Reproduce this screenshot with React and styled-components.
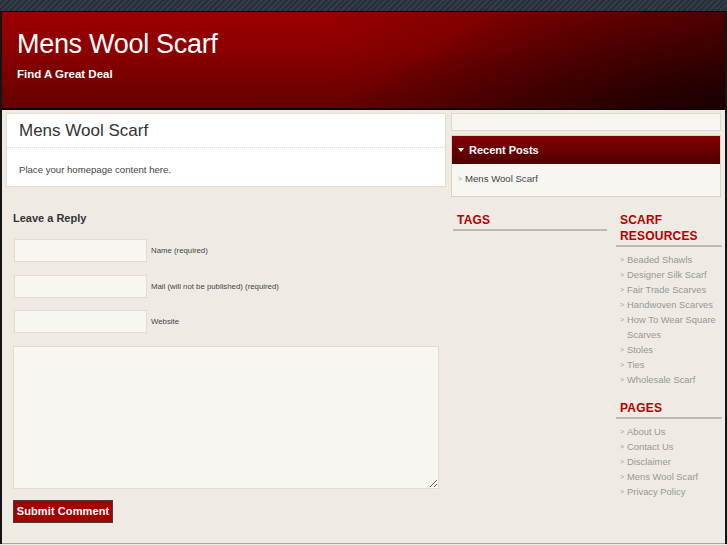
import React from 'react'
import styled, { createGlobalStyle } from 'styled-components'

const GlobalStyle = createGlobalStyle`
  body {
    margin: 0;
    background: #efebe4;
    font-family: "Liberation Sans", Arial, sans-serif;
  }
  * { box-sizing: border-box; }
`

const resources = [
  'Beaded Shawls',
  'Designer Silk Scarf',
  'Fair Trade Scarves',
  'Handwoven Scarves',
  'How To Wear Square Scarves',
  'Stoles',
  'Ties',
  'Wholesale Scarf',
]

const pages = ['About Us', 'Contact Us', 'Disclaimer', 'Mens Wool Scarf', 'Privacy Policy']

const fields = [
  { label: 'Name (required)' },
  { label: 'Mail (will not be published) (required)' },
  { label: 'Website' },
]

const App = () => {
  return (
    <>
      <GlobalStyle />
      <TopStrip />
      <Frame>
        <Header>
          <SiteTitle>Mens Wool Scarf</SiteTitle>
          <Tagline>Find A Great Deal</Tagline>
        </Header>
        <Body>
          <Main>
            <PostBox>
              <PostTitle>Mens Wool Scarf</PostTitle>
              <PostText>Place your homepage content here.</PostText>
            </PostBox>
            <ReplyTitle>Leave a Reply</ReplyTitle>
            <Form>
              {fields.map((f) => (
                <FieldRow key={f.label}>
                  <Input type="text" />
                  <FieldLabel>{f.label}</FieldLabel>
                </FieldRow>
              ))}
              <TextArea />
              <SubmitButton type="button">Submit Comment</SubmitButton>
            </Form>
          </Main>
          <Sidebar>
            <EmptyBox />
            <Widget>
              <WidgetHead>
                <Arrow />
                Recent Posts
              </WidgetHead>
              <WidgetBody>
                <PostLink>
                  <Marker>&gt;</Marker>Mens Wool Scarf
                </PostLink>
              </WidgetBody>
            </Widget>
            <SubColumns>
              <SubCol>
                <ColTitle>Tags</ColTitle>
              </SubCol>
              <SubCol>
                <ColTitle>Scarf Resources</ColTitle>
                <LinkList>
                  {resources.map((r) => (
                    <LinkItem key={r}>
                      <Marker>&gt;</Marker>
                      <span>{r}</span>
                    </LinkItem>
                  ))}
                </LinkList>
                <ColTitle $top={13}>Pages</ColTitle>
                <LinkList>
                  {pages.map((p) => (
                    <LinkItem key={p}>
                      <Marker>&gt;</Marker>
                      <span>{p}</span>
                    </LinkItem>
                  ))}
                </LinkList>
              </SubCol>
            </SubColumns>
          </Sidebar>
        </Body>
      </Frame>
    </>
  )
}

export default App

const TopStrip = styled.div`
  height: 11px;
  background: repeating-linear-gradient(135deg, #333c47 0 2px, #272f39 2px 4px);
`

const Frame = styled.div`
  width: 727px;
  border-top: 1px solid #0b0b0b;
  border-left: 2px solid #141414;
  border-right: 2px solid #141414;
`

const Header = styled.div`
  height: 98px;
  padding: 16px 15px 0;
  border-bottom: 2px solid #120505;
  background:
    radial-gradient(circle 540px at 700px 500px, rgba(0, 0, 0, 0.07) 97%, transparent 100%),
    radial-gradient(ellipse 320px 110px at 100% 100%, rgba(0, 0, 0, 0.55) 0%, transparent 100%),
    linear-gradient(to right, rgba(0, 0, 0, 0) 45%, rgba(0, 0, 0, 0.4) 100%),
    linear-gradient(to bottom, #9a0000 0%, #8c0000 40%, #650000 100%);
`

const SiteTitle = styled.h1`
  margin: 0;
  font-weight: normal;
  font-size: 27px;
  line-height: 32px;
  color: #ffffff;
  letter-spacing: -0.3px;
`

const Tagline = styled.div`
  margin-top: 7px;
  font-weight: bold;
  font-size: 11.5px;
  line-height: 14px;
  color: #ffffff;
`

const Body = styled.div`
  display: grid;
  grid-template-columns: 440px 271px;
  column-gap: 5px;
  padding: 3px 3px 0 4px;
  height: 434px;
  border-bottom: 1px solid #a8a49e;
  background: #efebe4;
`

const Main = styled.div`
  display: flex;
  flex-direction: column;
`

const PostBox = styled.div`
  background: #ffffff;
  border: 1px solid #e2dccf;
  height: 74px;
`

const PostTitle = styled.h2`
  margin: 0;
  padding-left: 12px;
  height: 34px;
  line-height: 33px;
  font-size: 17px;
  font-weight: normal;
  color: #333333;
  border-bottom: 1px dotted #dedad3;
`

const PostText = styled.p`
  margin: 0;
  padding: 16px 0 0 12px;
  font-size: 9.6px;
  line-height: 12px;
  color: #444444;
`

const ReplyTitle = styled.h3`
  margin: 24px 0 0 7px;
  font-size: 11px;
  line-height: 14px;
  font-weight: bold;
  color: #333333;
`

const Form = styled.div`
  display: flex;
  flex-direction: column;
  align-items: flex-start;
  margin-top: 14px;
  padding-left: 7px;
`

const FieldRow = styled.div`
  display: flex;
  align-items: center;
  gap: 4px;
  margin-bottom: 12.5px;
  padding-left: 1px;
`

const Input = styled.input`
  width: 133px;
  height: 23px;
  margin: 0;
  padding: 0 4px;
  background: #f8f6f1;
  border: 1px solid #e6dccb;
  outline: none;
`

const FieldLabel = styled.label`
  font-size: 7.8px;
  color: #444444;
`

const TextArea = styled.textarea`
  width: 426px;
  height: 143px;
  margin: 0;
  background: #f8f6f1;
  border: 1px solid #e6dccb;
  outline: none;
  resize: both;
`

const SubmitButton = styled.button`
  margin-top: 11px;
  width: 100px;
  height: 23px;
  padding: 0;
  background: #a30000;
  border: 1px solid #4a3a3a;
  color: #ffffff;
  font-family: "Liberation Sans", Arial, sans-serif;
  font-weight: bold;
  font-size: 11px;
  letter-spacing: 0.1px;
`

const Sidebar = styled.div`
  display: flex;
  flex-direction: column;
`

const EmptyBox = styled.div`
  width: 270px;
  height: 18px;
  background: #f8f6f1;
  border: 1px solid #e0d7c7;
`

const Widget = styled.div`
  width: 270px;
  margin-top: 4px;
  border: 1px solid #dcd2c1;
  background: #f8f6f1;
`

const WidgetHead = styled.div`
  display: flex;
  align-items: center;
  height: 28px;
  padding-left: 6px;
  gap: 5px;
  background: linear-gradient(to bottom, #800000 0%, #6a0000 50%, #4e0000 100%);
  color: #ffffff;
  font-weight: bold;
  font-size: 11px;
`

const Arrow = styled.span`
  width: 0;
  height: 0;
  border-left: 3px solid transparent;
  border-right: 3px solid transparent;
  border-top: 4px solid #ffffff;
`

const WidgetBody = styled.div`
  height: 32px;
  padding: 9px 0 0 6px;
`

const PostLink = styled.div`
  display: flex;
  align-items: center;
  font-size: 9.6px;
  line-height: 12px;
  color: #444444;
`

const Marker = styled.span`
  flex: none;
  width: 7px;
  font-size: 7px;
  color: #a0a0a0;
`

const SubColumns = styled.div`
  display: grid;
  grid-template-columns: 154px 106px;
  column-gap: 9px;
  margin-top: 15px;
  padding-left: 2px;
`

const SubCol = styled.div`
  display: flex;
  flex-direction: column;
`

const ColTitle = styled.h4`
  margin: ${(p) => p.$top || 0}px 0 0;
  padding: 0 0 1px 4px;
  border-bottom: 2px solid #bdb9b3;
  font-size: 12px;
  line-height: 16px;
  font-weight: bold;
  text-transform: uppercase;
  color: #b30000;
  letter-spacing: 0.2px;
`

const LinkList = styled.ul`
  list-style: none;
  margin: 5px 0 0;
  padding: 0 0 0 4px;
`

const LinkItem = styled.li`
  display: flex;
  font-size: 9.4px;
  line-height: 15px;
  color: #979797;
  letter-spacing: 0;
`
